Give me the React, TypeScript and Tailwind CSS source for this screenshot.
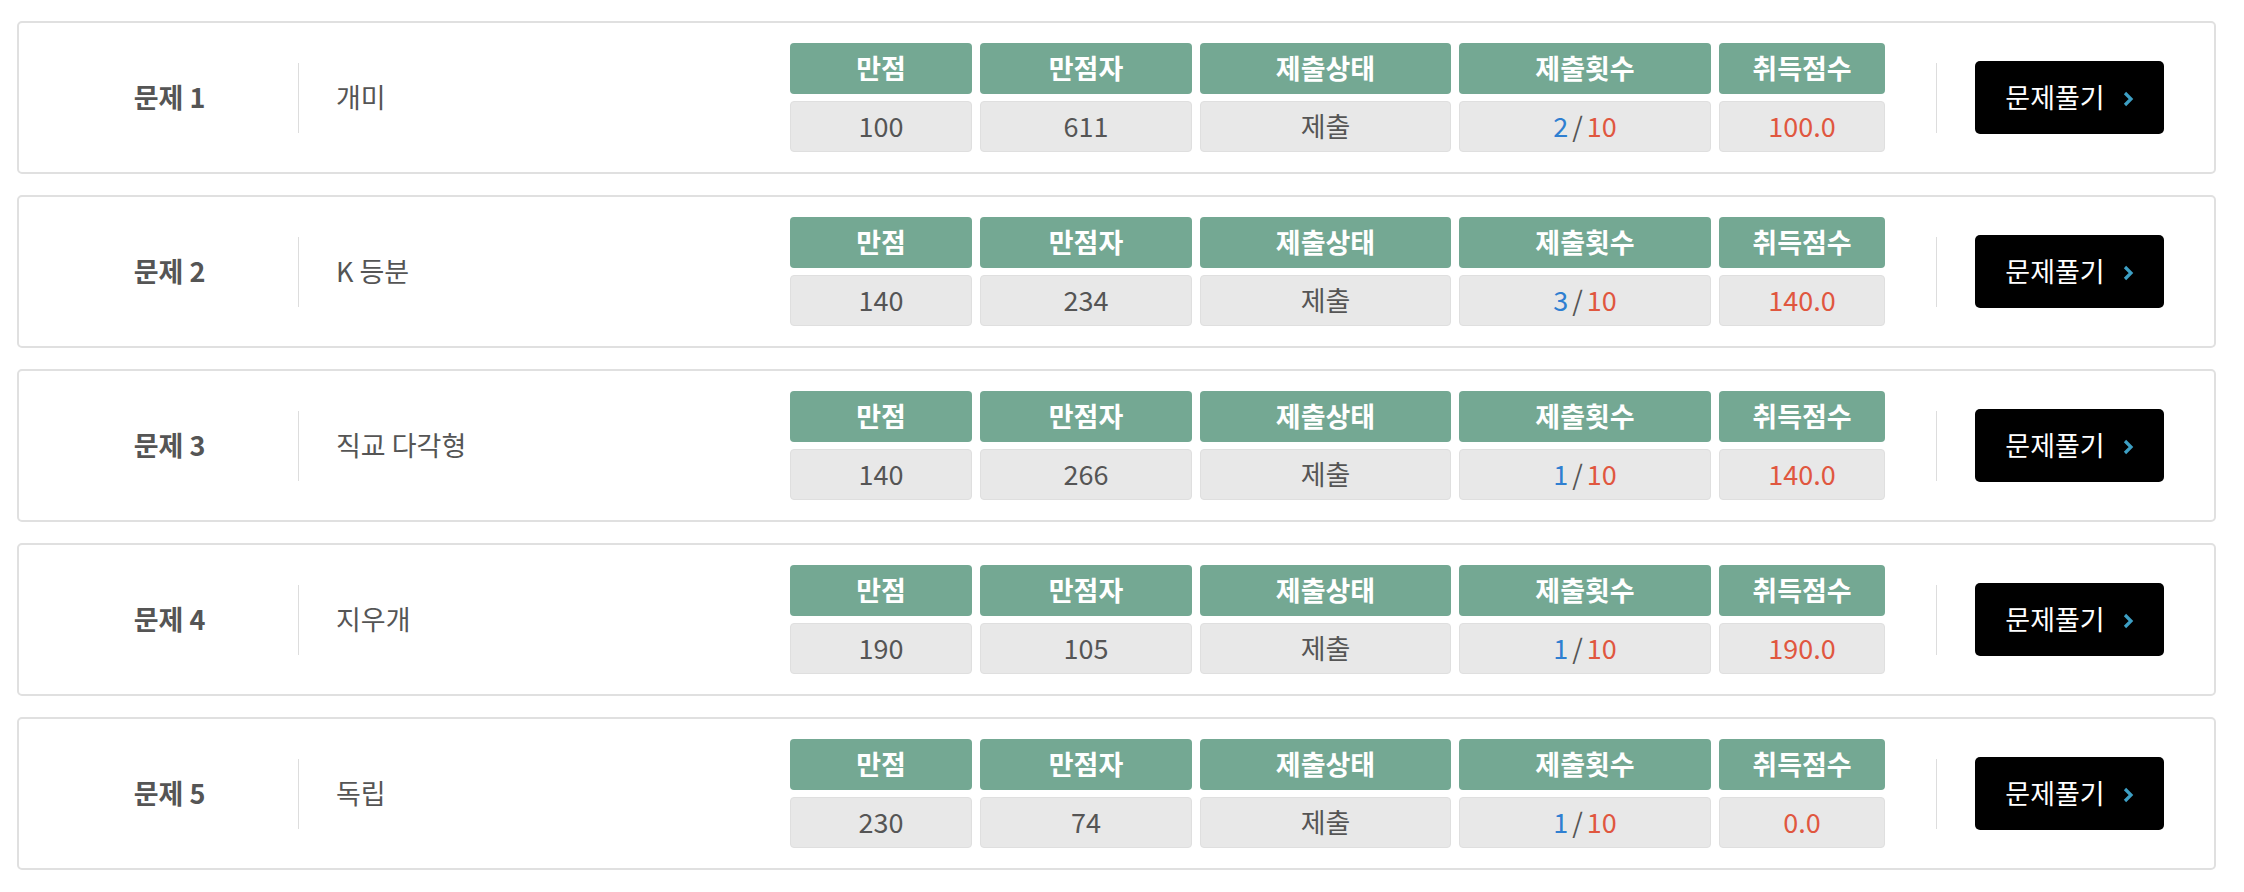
import React from 'react';

interface Problem {
  no: number;
  name: string;
  fullScore: number;
  perfectCount: number;
  status: string;
  tries: number;
  maxTries: number;
  score: string;
}

const problems: Problem[] = [
  { no: 1, name: '개미', fullScore: 100, perfectCount: 611, status: '제출', tries: 2, maxTries: 10, score: '100.0' },
  { no: 2, name: 'K 등분', fullScore: 140, perfectCount: 234, status: '제출', tries: 3, maxTries: 10, score: '140.0' },
  { no: 3, name: '직교 다각형', fullScore: 140, perfectCount: 266, status: '제출', tries: 1, maxTries: 10, score: '140.0' },
  { no: 4, name: '지우개', fullScore: 190, perfectCount: 105, status: '제출', tries: 1, maxTries: 10, score: '190.0' },
  { no: 5, name: '독립', fullScore: 230, perfectCount: 74, status: '제출', tries: 1, maxTries: 10, score: '0.0' },
];

const headers = ['만점', '만점자', '제출상태', '제출횟수', '취득점수'];

const font = { fontFamily: '"Noto Sans CJK KR", "Noto Sans", sans-serif' };

function HeadCell({ label }: { label: string }) {
  return (
    <div className="h-[51px] rounded-[4px] bg-[#74a893] flex items-center justify-center text-white text-[27px] font-bold">
      {label}
    </div>
  );
}

function DataCell({ children }: { children: React.ReactNode }) {
  return (
    <div className="h-[51px] rounded-[4px] bg-[#e8e8e8] border border-[#dfdfdf] flex items-center justify-center text-[27px] text-[#555]">
      {children}
    </div>
  );
}

function ProblemCard({ p }: { p: Problem }) {
  return (
    <div className="flex items-center h-[153px] rounded-[5px] border-2 border-[#e0e0e0] bg-white">
      {/* title */}
      <div className="w-[279px] pl-[22px] text-center text-[27px] font-bold text-[#555]">
        문제 {p.no}
      </div>
      <div className="w-px h-[70px] bg-[#dddddd]" />
      <div className="flex-1 pl-[37px] text-[27px] text-[#555]">{p.name}</div>

      {/* stats */}
      <div className="grid grid-cols-[182px_212px_251px_252px_166px] gap-x-2 gap-y-[7px]">
        {headers.map((h) => (
          <HeadCell key={h} label={h} />
        ))}
        <DataCell>{p.fullScore}</DataCell>
        <DataCell>{p.perfectCount}</DataCell>
        <DataCell>{p.status}</DataCell>
        <DataCell>
          <span className="text-[#2f7fd1]">{p.tries}</span>
          <span className="mx-[4px] text-[#555]">/</span>
          <span className="text-[#e0573f]">{p.maxTries}</span>
        </DataCell>
        <DataCell>
          <span className="text-[#e0573f]">{p.score}</span>
        </DataCell>
      </div>

      <div className="ml-[51px] w-px h-[70px] bg-[#dddddd]" />
      <button className="ml-[38px] mr-[50px] w-[189px] h-[73px] rounded-[5px] bg-black flex items-center justify-center gap-[18px] text-white text-[27px]">
        <span>문제풀기</span>
        <svg width="11" height="16" viewBox="0 0 11 16" className="mt-[2px]">
          <path d="M2 2 L8 8 L2 14" fill="none" stroke="#3d9fc4" strokeWidth="3.2" />
        </svg>
      </button>
    </div>
  );
}

export default function App() {
  return (
    <div className="min-h-[892px] bg-white pl-[17px] pr-[28px] pt-[21px]" style={font}>
      <div className="flex flex-col gap-[21px]">
        {problems.map((p) => (
          <ProblemCard key={p.no} p={p} />
        ))}
      </div>
    </div>
  );
}
